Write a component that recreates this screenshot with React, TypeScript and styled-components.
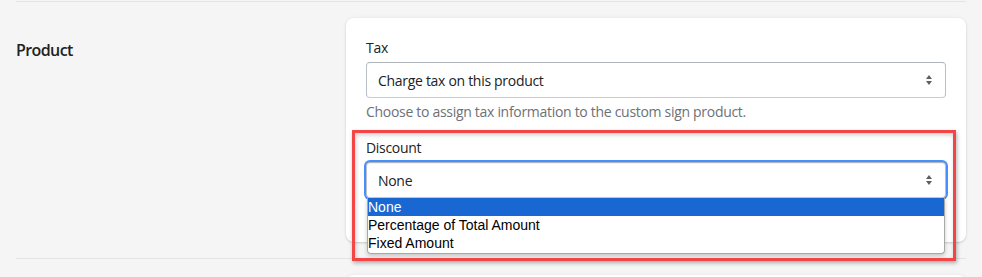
import React from "react";
import styled, { createGlobalStyle } from "styled-components";

const Global = createGlobalStyle`
  html, body { margin: 0; padding: 0; background: #f5f5f5; }
  body { font-family: "Open Sans", "Noto Sans", sans-serif; color: #202223; letter-spacing: -0.3px; }
  * { box-sizing: border-box; }
`;

const Page = styled.div`
  padding: 1px 16px 0;
`;

const Section = styled.section`
  display: grid;
  grid-template-columns: 330px 1fr;
  padding: 16px 0;
  border-top: 1px solid #e1e3e5;
`;

const Heading = styled.h2`
  margin: 0;
  padding-top: 20px;
  font-size: 16px;
  line-height: 24px;
  font-weight: 600;
  letter-spacing: -0.6px;
  color: #202223;
`;

const Card = styled.div`
  background: #fff;
  border-radius: 8px;
  padding: 20px;
  min-height: 20px;
  box-shadow: 0 0 5px rgba(23, 24, 24, 0.05), 0 1px 2px rgba(0, 0, 0, 0.15);
  display: flex;
  flex-direction: column;
  gap: 16px;
`;

const Field = styled.div`
  position: relative;
  display: flex;
  flex-direction: column;
`;

const Label = styled.label`
  font-size: 14px;
  line-height: 20px;
  margin-bottom: 4px;
  color: #202223;
`;

const SelectBox = styled.div<{ $focused?: boolean }>`
  position: relative;
  height: 36px;
  display: flex;
  align-items: center;
  justify-content: space-between;
  padding: 0 12px 0 11px;
  border: 1px solid #babfc3;
  border-top-color: #aeb4b9;
  border-bottom-color: #c9cccf;
  border-radius: 4px;
  background: #fff;
  font-size: 14px;
  color: #202223;
  box-shadow: ${(p) =>
    p.$focused
      ? "0 0 0 2px #458fff, inset 0 1px 1px rgba(0,0,0,0.06)"
      : "none"};
`;

const Help = styled.div`
  margin-top: 4px;
  font-size: 14px;
  line-height: 20px;
  min-height: 20px;
  color: #6d7175;
`;

const Dropdown = styled.ul`
  position: absolute;
  top: calc(100% + 1px);
  left: 0;
  right: 0;
  margin: 0;
  padding: 0 0 1px;
  list-style: none;
  background: #fff;
  border: 1px solid #a9a9a9;
  border-top: none;
  border-radius: 0 0 4px 4px;
  box-shadow: 0 2px 4px rgba(0, 0, 0, 0.2);
  font-family: "Liberation Sans", Arial, sans-serif;
  font-size: 14px;
  letter-spacing: 0;
  z-index: 2;
`;

const Option = styled.li<{ $active?: boolean }>`
  height: 18px;
  line-height: 18px;
  padding-left: 0;
  color: ${(p) => (p.$active ? "#fff" : "#000")};
  background: ${(p) => (p.$active ? "#1967d2" : "transparent")};
  white-space: nowrap;
`;

const Annotation = styled.div`
  position: absolute;
  left: -14px;
  top: -8px;
  width: 604px;
  height: 131px;
  border: 3px solid #f24646;
  box-shadow: 1px 2px 4px rgba(0, 0, 0, 0.3), inset 1px 2px 4px rgba(0, 0, 0, 0.2);
  pointer-events: none;
  z-index: 3;
`;

const Arrows = () => (
  <svg width="8" height="12" viewBox="0 0 8 12" aria-hidden>
    <path d="M4 1 L7 5 L1 5 Z" fill="#5c5f62" />
    <path d="M4 11 L7 7 L1 7 Z" fill="#5c5f62" />
  </svg>
);

export default function App() {
  return (
    <Page>
      <Global />
      <Section>
        <Heading>Product</Heading>
        <Card>
          <Field>
            <Label>Tax</Label>
            <SelectBox>
              <span>Charge tax on this product</span>
              <Arrows />
            </SelectBox>
            <Help>Choose to assign tax information to the custom sign product.</Help>
          </Field>
          <Field>
            <Annotation />
            <Label>Discount</Label>
            <SelectBox $focused>
              <span>None</span>
              <Arrows />
              <Dropdown>
                <Option $active>None</Option>
                <Option>Percentage of Total Amount</Option>
                <Option>Fixed Amount</Option>
              </Dropdown>
            </SelectBox>
            <Help />
          </Field>
        </Card>
      </Section>
      <Section>
        <div />
        <Card />
      </Section>
    </Page>
  );
}
